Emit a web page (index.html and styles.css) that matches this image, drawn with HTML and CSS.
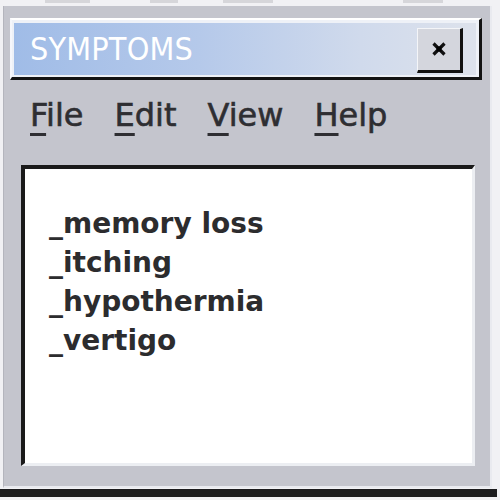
FILE: index.html
```html
<!DOCTYPE html>
<html>
<head>
<meta charset="utf-8">
<link rel="stylesheet" href="styles.css">
</head>
<body>
<div class="topstrip">
  <span class="blk b1"></span><span class="blk b2"></span><span class="blk b3"></span><span class="blk b4"></span>
</div>
<div class="window">
  <div class="titlebar">
    <div class="title-inner">
      <span class="title">SYMPTOMS</span>
      <div class="close">
        <svg width="16" height="16" viewBox="0 0 16 16"><path d="M2.5 2.5 L13.5 13.5 M13.5 2.5 L2.5 13.5" stroke="#111" stroke-width="3.2" fill="none"/><rect x="5.5" y="5.5" width="5" height="5" fill="#000"/></svg>
      </div>
    </div>
  </div>
  <div class="menubar">
    <span class="item"><u>F</u>ile</span>
    <span class="item"><u>E</u>dit</span>
    <span class="item"><u>V</u>iew</span>
    <span class="item"><u>H</u>elp</span>
  </div>
  <div class="content">
    <div class="line">_memory loss</div>
    <div class="line">_itching</div>
    <div class="line">_hypothermia</div>
    <div class="line">_vertigo</div>
  </div>
</div>
<div class="bottombar"></div>
</body>
</html>
```

FILE: styles.css
```css
html, body {
  margin: 0;
  padding: 0;
}
body {
  width: 500px;
  height: 500px;
  overflow: hidden;
  background: #f1f1f4;
  font-family: "DejaVu Sans", "Liberation Sans", sans-serif;
}
.topstrip {
  height: 6px;
  display: flex;
  align-items: flex-start;
}
.blk {
  height: 3px;
  background: #d6d6da;
}
.b1 { margin-left: 45px; width: 45px; }
.b2 { margin-left: 60px; width: 28px; }
.b3 { margin-left: 45px; width: 50px; }
.b4 { margin-left: 130px; width: 40px; }
.window {
  margin-left: 3px;
  width: 489px;
  height: 482px;
  box-sizing: border-box;
  background: #c4c5cd;
  border-left: 1px solid #b4b5bd;
  border-right: 2px solid #e9eaef;
  border-bottom: 2px solid #e9eaef;
  display: flex;
  flex-direction: column;
  padding: 12px 8px 0 6px;
}
.titlebar {
  height: 62px;
  box-sizing: border-box;
  border-top: 2px solid #ffffff;
  border-left: 2px solid #f6f7fb;
  border-right: 3px solid #141414;
  border-bottom: 3px solid #141414;
  background: #eef1f7;
  padding: 3px 3px 2px 2px;
}
.title-inner {
  height: 100%;
  display: flex;
  align-items: center;
  justify-content: space-between;
  background: linear-gradient(90deg, #a0bce7 0%, #b5c9ea 40%, #d0daec 75%, #dde2ec 100%);
  padding-left: 16px;
  padding-right: 13px;
}
.title {
  color: #ffffff;
  font-family: "DejaVu Sans Condensed", "DejaVu Sans", sans-serif;
  font-stretch: condensed;
  font-size: 32px;
  line-height: 1;
  letter-spacing: 0.2px;
}
.close {
  width: 46px;
  height: 45px;
  box-sizing: border-box;
  background: #d4d6dd;
  border-top: 1px solid #f4f5f8;
  border-left: 1px solid #f4f5f8;
  border-right: 3px solid #111111;
  border-bottom: 3px solid #111111;
  display: flex;
  align-items: center;
  justify-content: center;
  margin-top: 2px;
}
.menubar {
  display: flex;
  gap: 31px;
  padding-left: 20px;
  margin-top: 17px;
  font-size: 32px;
  line-height: 37px;
  color: #2e2e32;
  -webkit-text-stroke: 0.6px #2e2e32;
}
.menubar u {
  text-decoration-thickness: 3px;
  text-underline-offset: 7px;
}
.content {
  margin: 31px 0 0 11px;
  width: 454px;
  height: 301px;
  box-sizing: border-box;
  background: #ffffff;
  border-top: 4px solid #1a1a1a;
  border-left: 4px solid #1a1a1a;
  border-right: 3px solid #eceef2;
  border-bottom: 3px solid #eceef2;
  padding: 35px 0 0 24px;
}
.line {
  font-weight: bold;
  font-size: 28px;
  line-height: 39px;
  color: #2c2c2e;
}
.bottombar {
  margin-top: 1px;
  width: 497px;
  height: 8px;
  background: #1c1c1e;
}
```
